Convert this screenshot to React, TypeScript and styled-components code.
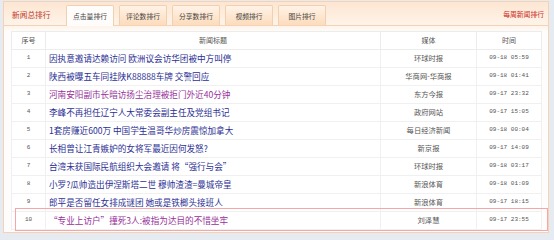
import styled, { createGlobalStyle } from 'styled-components';

const GlobalStyle = createGlobalStyle`
  html, body {
    margin: 0;
    padding: 0;
    background: #e6ebf2;
  }
  body {
    font-family: "Noto Sans CJK SC", "Liberation Sans", sans-serif;
  }
`;

interface NewsItem {
  title: string;
  media: string;
  time: string;
  visited?: boolean;
}

const news: NewsItem[] = [
  { title: '因执意邀请达赖访问 欧洲议会访华团被中方叫停', media: '环球时报', time: '09-18 05:59' },
  { title: '陕西被曝五车同挂陕K88888车牌 交警回应', media: '华商网-华商报', time: '09-18 01:41' },
  { title: '河南安阳副市长暗访扬尘治理被拒门外近40分钟', media: '东方今报', time: '09-17 23:32', visited: true },
  { title: '李峰不再担任辽宁人大常委会副主任及党组书记', media: '政府网站', time: '09-17 15:05' },
  { title: '1套房赚近600万 中国学生温哥华炒房震惊加拿大', media: '每日经济新闻', time: '09-18 00:04' },
  { title: '长相曾让江青嫉妒的女将军最近因何发怒?', media: '新京报', time: '09-17 14:09' },
  { title: '台湾未获国际民航组织大会邀请 将“强行与会”', media: '环球时报', time: '09-18 03:17' },
  { title: '小罗?瓜帅造出伊涅斯塔二世 穆帅渣渣=曼城帝皇', media: '新浪体育', time: '09-18 01:09' },
  { title: '郎平是否留任女排成谜团 她或是铁榔头接班人', media: '新浪体育', time: '09-17 18:15' },
  { title: '“专业上访户”撞死3人:被指为达目的不惜坐牢', media: '刘泽慧', time: '09-17 23:55', visited: true },
];

const tabs = ['点击量排行', '评论数排行', '分享数排行', '视频排行', '图片排行'];

const Panel = styled.div`
  position: relative;
  box-sizing: border-box;
  margin: 1px 0 0 3px;
  width: 546px;
  height: 232px;
  border: 1px solid #f3d2b6;
  background: linear-gradient(#fde6d2, #fef4ea 24px, #fffdfb 30px);
`;

const Header = styled.div`
  display: flex;
  align-items: flex-end;
  height: 23px;
  padding-left: 8px;
`;

const PanelTitle = styled.div`
  align-self: center;
  width: 54px;
  margin-top: 1px;
  font-size: 7.7px;
  color: #bd3a2c;
`;

const TabList = styled.div`
  display: flex;
  gap: 5px;
  flex: 1;
`;

const Tab = styled.div<{ $active?: boolean }>`
  box-sizing: border-box;
  width: 48px;
  height: ${({ $active }) => ($active ? '21px' : '20px')};
  margin-bottom: ${({ $active }) => ($active ? '-1px' : '0')};
  display: flex;
  align-items: center;
  justify-content: center;
  border: 1px solid #f2cfae;
  border-bottom: none;
  border-radius: 2px 2px 0 0;
  font-size: 6.8px;
  color: #444;
  background: ${({ $active }) =>
    $active ? '#fffdfb' : 'linear-gradient(#fff3e8, #fcdcbc)'};
  position: relative;
`;

const WeeklyLink = styled.div`
  align-self: center;
  margin-right: 4px;
  font-size: 6.8px;
  color: #cc2a22;
`;

const Body = styled.div`
  border-top: 1px solid #f3d2b6;
  padding: 5px 5px 0 7px;
`;

const Table = styled.table`
  width: 530px;
  border-collapse: collapse;
  table-layout: fixed;
  background: #fff;
  border: 1px solid #e6e6e6;
`;

const Row = styled.tr`
  height: 18px;
`;

const Th = styled.th`
  padding: 0 0 1px;
  border: 1px solid #ececec;
  font-weight: normal;
  font-size: 7px;
  line-height: 10px;
  color: #555;
  text-align: center;
`;

const Td = styled.td<{ $kind?: 'num' | 'title' | 'media' | 'time' }>`
  padding: 0 0 2px ${({ $kind }) => ($kind === 'title' ? '3px' : '0')};
  border: 1px solid #f0f0f0;
  text-align: ${({ $kind }) => ($kind === 'title' ? 'left' : 'center')};
  font-size: ${({ $kind }) =>
    $kind === 'num' ? '6px' : $kind === 'time' ? '6px' : $kind === 'media' ? '7.3px' : '8.6px'};
  line-height: 12px;
  font-family: ${({ $kind }) =>
    $kind === 'num' || $kind === 'time'
      ? '"Liberation Mono", "Noto Sans CJK SC", monospace'
      : '"Noto Sans CJK SC", sans-serif'};
  color: #555;
  white-space: nowrap;
  overflow: hidden;
`;

const TitleLink = styled.span<{ $visited?: boolean }>`
  color: ${({ $visited }) => ($visited ? '#98309a' : '#2c2f94')};
`;

const Highlight = styled.div`
  position: absolute;
  left: 11px;
  top: 206px;
  width: 533px;
  height: 23px;
  box-sizing: border-box;
  border: 1.5px solid #f6a6a6;
  pointer-events: none;
`;

export default function App() {
  return (
    <>
      <GlobalStyle />
      <Panel>
        <Header>
          <PanelTitle>新闻总排行</PanelTitle>
          <TabList>
            {tabs.map((t, i) => (
              <Tab key={t} $active={i === 0}>
                {t}
              </Tab>
            ))}
          </TabList>
          <WeeklyLink>每周新闻排行</WeeklyLink>
        </Header>
        <Body>
          <Table>
            <colgroup>
              <col style={{ width: 34 }} />
              <col style={{ width: 335 }} />
              <col style={{ width: 96 }} />
              <col style={{ width: 65 }} />
            </colgroup>
            <thead>
              <Row>
                <Th>序号</Th>
                <Th>新闻标题</Th>
                <Th>媒体</Th>
                <Th>时间</Th>
              </Row>
            </thead>
            <tbody>
              {news.map((n, i) => (
                <Row key={i}>
                  <Td $kind="num">{i + 1}</Td>
                  <Td $kind="title">
                    <TitleLink $visited={n.visited}>{n.title}</TitleLink>
                  </Td>
                  <Td $kind="media">{n.media}</Td>
                  <Td $kind="time">{n.time}</Td>
                </Row>
              ))}
            </tbody>
          </Table>
        </Body>
        <Highlight />
      </Panel>
    </>
  );
}
